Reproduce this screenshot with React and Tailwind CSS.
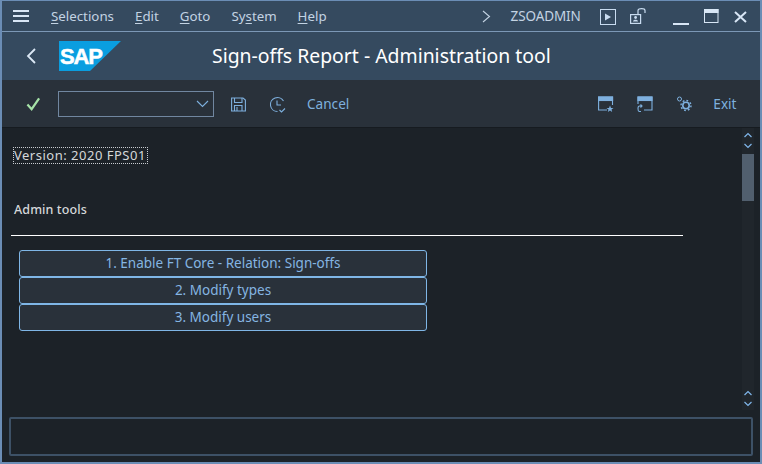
import React from "react";

const font = { fontFamily: '"Noto Sans", sans-serif' };

const MenuItem = ({ hot, rest }) => (
  <span>
    <span className="underline underline-offset-2">{hot}</span>
    {rest}
  </span>
);

const Chevrons = () => (
  <div className="flex flex-col items-center gap-[3px]">
    <svg width="8" height="8" viewBox="0 0 8 8" fill="none" stroke="#7fb6ea" strokeWidth="1.2">
      <path d="M0.5 6L4 2.5L7.5 6" />
    </svg>
    <svg width="8" height="8" viewBox="0 0 8 8" fill="none" stroke="#7fb6ea" strokeWidth="1.2">
      <path d="M0.5 2L4 5.5L7.5 2" />
    </svg>
  </div>
);

const ActionButton = ({ children }) => (
  <button className="h-[27px] w-[408px] rounded-[3px] border border-[#7fb6e6] bg-[#29313a] text-[13.5px] leading-none text-[#85b5e2]">
    {children}
  </button>
);

export default function App() {
  return (
    <div
      className="flex h-[464px] w-[762px] flex-col overflow-hidden border-x-2 border-t border-b-2 border-[#6b8db5] bg-[#1c2228]"
      style={font}
    >
      {/* Menu bar */}
      <div className="flex h-[31px] shrink-0 items-center border-b border-[#7c98b6] bg-[#354a5f] pt-[1px] text-[13.3px] text-[#c3d3e3]">
        <svg className="ml-[11px]" width="17" height="13" viewBox="0 0 17 13" fill="#d8e6f5">
          <rect x="0" y="0" width="16" height="2" />
          <rect x="0" y="5" width="16" height="2" />
          <rect x="0" y="10" width="16" height="2" />
        </svg>
        <div className="ml-[21px] flex gap-[21px]">
          <MenuItem hot="S" rest="elections" />
          <MenuItem hot="E" rest="dit" />
          <MenuItem hot="G" rest="oto" />
          <span>
            Sy<span className="underline underline-offset-2">s</span>tem
          </span>
          <MenuItem hot="H" rest="elp" />
        </div>
        <svg className="ml-[155px]" width="9" height="13" viewBox="0 0 9 13" fill="none" stroke="#c3d3e3" strokeWidth="1.1">
          <path d="M1 1L7.5 6.5L1 12" />
        </svg>
        <span className="ml-[20px] text-[13.5px] tracking-[-0.1px]">ZSOADMIN</span>
        <svg className="ml-[19px]" width="16" height="16" viewBox="0 0 16 16" fill="none" stroke="#c9dcf0">
          <rect x="0.5" y="0.5" width="15" height="15" strokeWidth="1" />
          <path d="M5 4.5L11 8L5 11.5Z" fill="#c9dcf0" stroke="none" />
        </svg>
        <svg className="ml-[14px] mb-[3px]" width="17" height="17" viewBox="0 0 17 17" fill="none" stroke="#c9dcf0" strokeWidth="1.2">
          <rect x="0.6" y="7.6" width="10" height="8.8" />
          <path d="M8 7V3.5C8 1 15 1 15 3.5V6" />
          <circle cx="5.6" cy="10.5" r="1.4" fill="#c9dcf0" stroke="none" />
          <path d="M3 14.5C3 12 8 12 8 14.5Z" fill="#c9dcf0" stroke="none" />
        </svg>
        <div className="ml-[26px] mt-[14px] h-[2px] w-[16px] bg-[#d8e6f5]" />
        <svg className="ml-[15px]" width="15" height="15" viewBox="0 0 15 15" fill="none" stroke="#d8e6f5">
          <rect x="0.5" y="0.5" width="13.5" height="13" />
          <rect x="0.5" y="0.5" width="13.5" height="3" fill="#d8e6f5" />
        </svg>
        <svg className="ml-[15px]" width="13" height="12" viewBox="0 0 13 12" fill="none" stroke="#d8e6f5" strokeWidth="2">
          <path d="M1 1L12 11M12 1L1 11" />
        </svg>
      </div>

      {/* Title bar */}
      <div className="relative flex h-[48px] shrink-0 items-center bg-[#354a5f]">
        <svg className="ml-[24px]" width="11" height="16" viewBox="0 0 11 16" fill="none" stroke="#dbe8f5" strokeWidth="1.8">
          <path d="M9 1L2 8L9 15" />
        </svg>
        <svg className="ml-[22px]" width="62" height="30" viewBox="0 0 62 30">
          <path d="M0 0H62L31 30H0Z" fill="#0a9ee0" />
          <text x="1" y="23" fontSize="22" fontWeight="800" fill="#fff" stroke="#fff" strokeWidth="0.5" fontFamily='"Liberation Sans", sans-serif' letterSpacing="-1.2">
            SAP
          </text>
        </svg>
        <h1 className="ml-[91px] text-[19.4px] font-normal text-white">Sign-offs Report - Administration tool</h1>
      </div>

      {/* Toolbar */}
      <div className="flex h-[48px] shrink-0 items-center border-b border-[#161b20] bg-[#29313a] pt-[1px] text-[13.6px] text-[#7eb0de]">
        <svg className="ml-[24px] mb-[1px]" width="15" height="14" viewBox="0 0 16 15" fill="none" stroke="#a6e3a8" strokeWidth="2.4">
          <path d="M1.5 8L6 13L14 1.5" />
        </svg>
        <div className="ml-[17px] flex h-[26px] w-[156px] items-center justify-end border border-[#7187a0] pr-[4px]">
          <svg width="13" height="8" viewBox="0 0 13 8" fill="none" stroke="#7eb0de" strokeWidth="1.1">
            <path d="M1 1L6.5 6.5L12 1" />
          </svg>
        </div>
        <svg className="ml-[17px]" width="15" height="15" viewBox="0 0 15 15" fill="none" stroke="#7eb0de" strokeWidth="1.1">
          <path d="M0.6 1H12L14.4 3V14H0.6Z" />
          <path d="M3.5 1V5.5H11V1M3.5 14V8.5H11V14M6 10V14" />
        </svg>
        <svg className="ml-[23px]" width="17" height="17" viewBox="0 0 17 17" fill="none" stroke="#7eb0de" strokeWidth="1.1">
          <path d="M14.5 5A7 7 0 1 0 8.5 15.5" />
          <path d="M8 4.5V9H12" />
          <path d="M10.5 14L12.5 16L16 12.5" />
        </svg>
        <span className="ml-[21px]">Cancel</span>
        <svg className="ml-[249px]" width="16" height="16" viewBox="0 0 16 16" fill="none" stroke="#7eb0de" strokeWidth="1.1">
          <path d="M14.5 9V1H0.6V14H9" />
          <rect x="0.6" y="1" width="14" height="3.5" fill="#7eb0de" />
          <path d="M12 9.5L13 12H15.5L13.5 13.5L14.2 16L12 14.5L9.8 16L10.5 13.5L8.5 12H11Z" fill="#7eb0de" stroke="none" />
        </svg>
        <svg className="ml-[23px]" width="16" height="16" viewBox="0 0 16 16" fill="none" stroke="#7eb0de" strokeWidth="1.1">
          <path d="M1 8V1H15V14H7" />
          <rect x="1" y="1" width="14" height="3.5" fill="#7eb0de" />
          <path d="M5 10H2.5C0.5 10 0.5 15.5 2.5 15.5H4M3.5 8.5L5 10L3.5 11.5" />
        </svg>
        <svg className="ml-[23px]" width="16" height="16" viewBox="0 0 16 16" fill="none" stroke="#7eb0de">
          <circle cx="3.5" cy="3" r="2" />
          <circle cx="10" cy="9.5" r="3.2" strokeWidth="1.6" />
          <circle cx="10" cy="9.5" r="5" strokeWidth="1.4" strokeDasharray="1.8 2.1" />
        </svg>
        <span className="ml-[21px]">Exit</span>
      </div>

      {/* Content */}
      <div className="flex min-h-0 flex-1">
        <div className="flex-1 pl-[9px]">
          <div className="mt-[19px] ml-[2px] inline-block border border-dotted border-[#c8ccd0] pr-[1px] text-[13px] leading-[15px] tracking-[0.5px] text-[#d5d8da]">
            Version: 2020 FPS01
          </div>
          <div className="mt-[36px] ml-[3px] text-[12.5px] leading-[15px] font-medium tracking-[0.1px] text-[#d5d8da]">Admin tools</div>
          <div className="mt-[18px] h-px w-[672px] bg-white" />
          <div className="mt-[14px] ml-[8px] flex flex-col">
            <ActionButton>1. Enable FT Core - Relation: Sign-offs</ActionButton>
            <ActionButton>2. Modify types</ActionButton>
            <ActionButton>3. Modify users</ActionButton>
          </div>
        </div>
        <div className="mr-[6px] flex h-[282px] w-[12px] shrink-0 flex-col items-center justify-between bg-[#20262c] pt-[3px] pb-[2px]">
          <div className="flex w-full flex-col items-center">
            <Chevrons />
            <div className="mt-[4px] h-[47px] w-full bg-[#515f6e]" />
          </div>
          <Chevrons />
        </div>
      </div>

      {/* Status bar */}
      <div className="mb-[6px] ml-[7px] mr-[7px] h-[39px] shrink-0 rounded-[2px] border-2 border-[#3d5166] bg-[#1c2228]" />
    </div>
  );
}
